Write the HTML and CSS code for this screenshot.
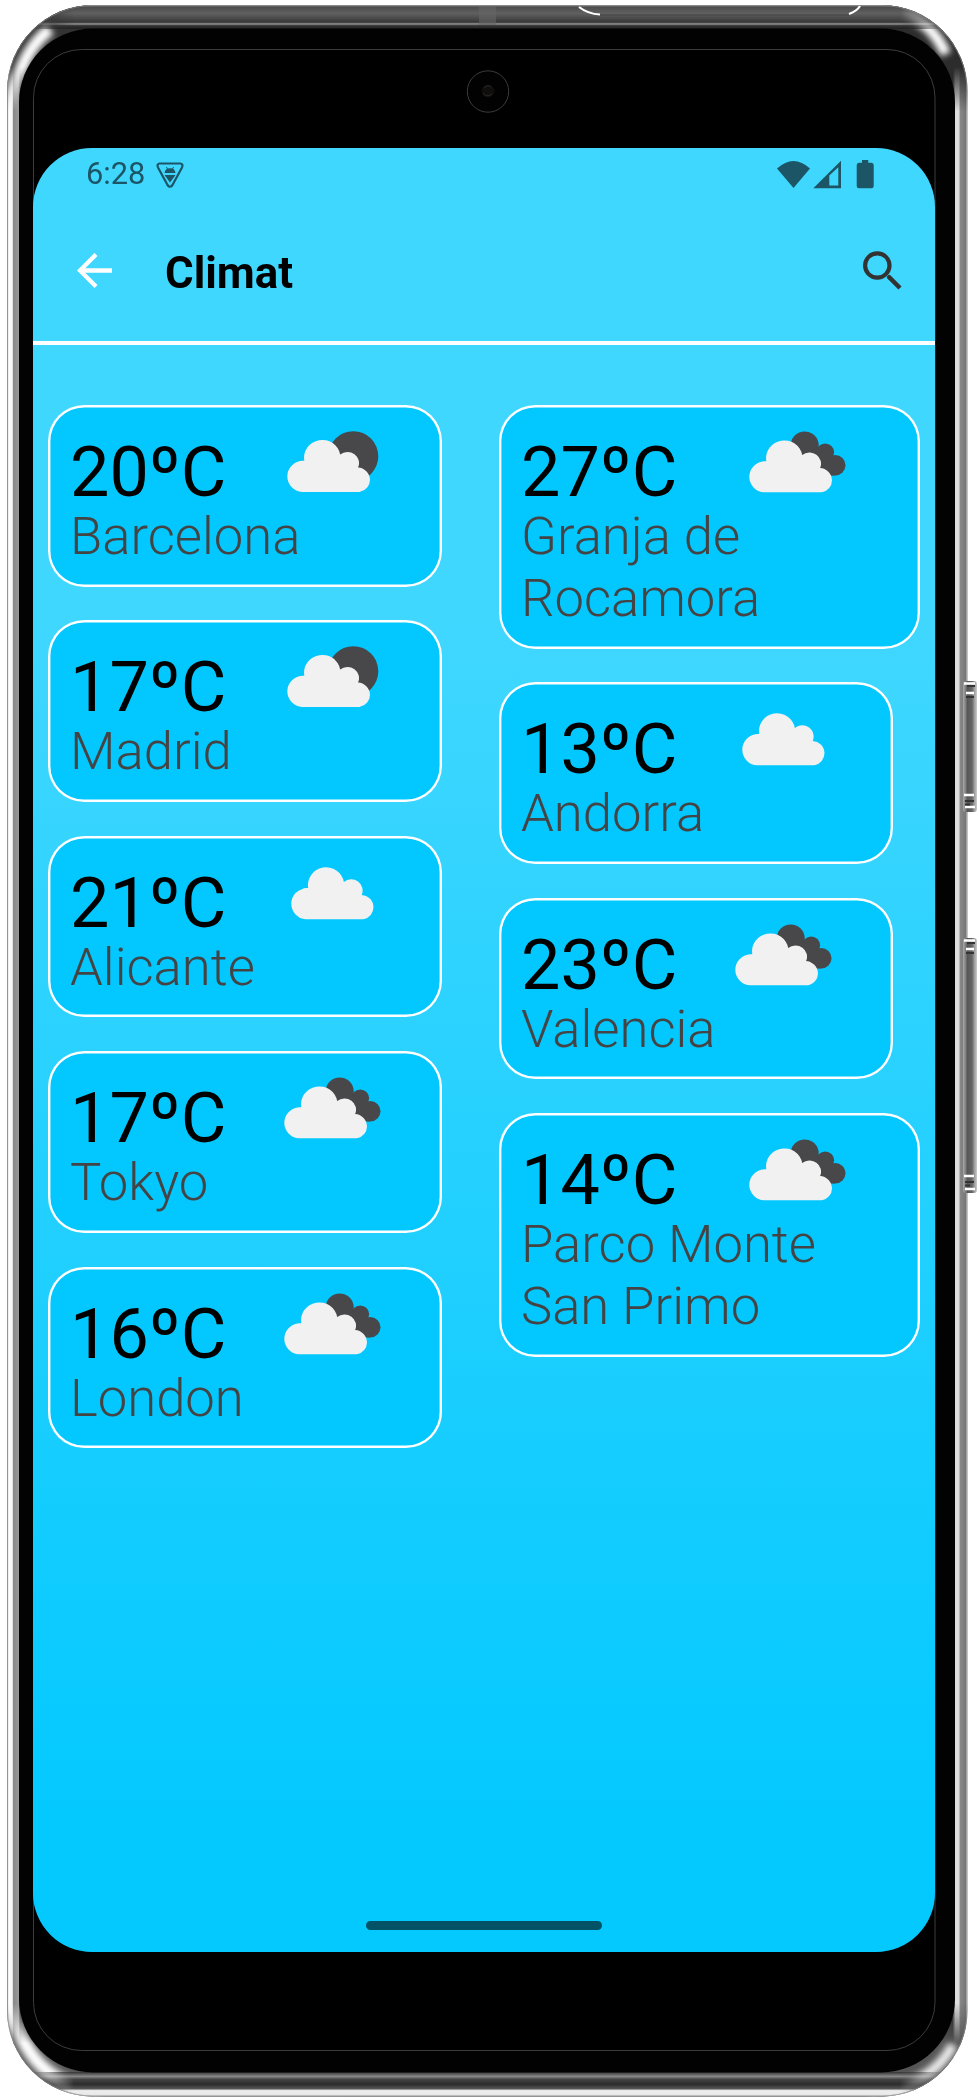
FILE: index.html
```html
<!DOCTYPE html>
<html lang="en">
<head>
<meta charset="utf-8">
<title>Climat</title>
<link rel="stylesheet" href="styles.css">
</head>
<body>
<svg class="defs" width="0" height="0" aria-hidden="true">
  <defs>
    <symbol id="cloud" viewBox="0 0 83.500 53" preserveAspectRatio="none">
      <path d="M15.7 53A15.7 15.7 0 0 1 15.7 21.7H17.8A17.6 17.6 0 1 1 52.6 15.5A11.2 11.2 0 0 1 70 28.6A12.3 12.3 0 0 1 71.3 53Z"/>
    </symbol>
    <symbol id="wx-moon" viewBox="0 0 110 82">
      <circle cx="75.3" cy="33.2" r="25" fill="#48484a"/>
      <use class="white" href="#cloud" x="8" y="16" width="86" height="53"/>
    </symbol>
    <symbol id="wx-broken" viewBox="0 0 110 82">
      <g fill="#48484a"><circle cx="61.7" cy="22.4" r="14"/><circle cx="82.2" cy="29.3" r="8.9"/><circle cx="92.2" cy="42.3" r="10.3"/><path d="M60 22L82 29 92 52.6H70L52 34Z"/></g>
      <use class="white" href="#cloud" x="5" y="16.5" width="86" height="53"/>
    </symbol>
    <symbol id="wx-cloud" viewBox="0 0 110 82">
      <use class="white" href="#cloud" x="12" y="12.4" width="85.5" height="53"/>
    </symbol>
  </defs>
</svg>

<div class="device">
  <svg class="frame" viewBox="0 0 978 2100" aria-hidden="true">
    <defs>
      <linearGradient id="side" gradientUnits="userSpaceOnUse" x1="7" y1="0" x2="967" y2="0">
        <stop offset="0" stop-color="#888"/><stop offset=".0012" stop-color="#ddd"/><stop offset=".0018" stop-color="#fff"/><stop offset=".0055" stop-color="#f6f6f6"/><stop offset=".0068" stop-color="#888"/><stop offset=".012" stop-color="#999"/><stop offset=".0135" stop-color="#333"/>
        <stop offset=".985" stop-color="#222"/><stop offset=".988" stop-color="#ddd"/><stop offset=".9915" stop-color="#ddd"/><stop offset=".993" stop-color="#888"/><stop offset=".9985" stop-color="#777"/><stop offset="1" stop-color="#ccc"/>
      </linearGradient>
      <linearGradient id="top" x1="0" y1="0" x2="0" y2="1">
        <stop offset="0" stop-color="#aaa"/><stop offset=".08" stop-color="#4c4c4c"/><stop offset=".35" stop-color="#606060"/><stop offset=".72" stop-color="#383838"/><stop offset=".79" stop-color="#999"/><stop offset=".86" stop-color="#333"/><stop offset="1" stop-color="#222"/>
      </linearGradient>
      <linearGradient id="bottom" x1="0" y1="0" x2="0" y2="1">
        <stop offset="0" stop-color="#333"/><stop offset=".18" stop-color="#888"/><stop offset=".3" stop-color="#444"/><stop offset=".5" stop-color="#2c2c2c"/><stop offset=".68" stop-color="#555"/><stop offset=".76" stop-color="#eee"/><stop offset=".95" stop-color="#e6e6e6"/><stop offset="1" stop-color="#aaa"/>
      </linearGradient>
      <linearGradient id="fade" x1="0" y1="0" x2="1" y2="0">
        <stop offset=".02" stop-color="#000"/><stop offset=".07" stop-color="#fff"/><stop offset=".93" stop-color="#fff"/><stop offset=".98" stop-color="#000"/>
      </linearGradient>
      <linearGradient id="fadeV" gradientUnits="userSpaceOnUse" x1="0" y1="0" x2="0" y2="2100">
        <stop offset=".032" stop-color="#fff"/><stop offset=".053" stop-color="#000"/><stop offset=".954" stop-color="#000"/><stop offset=".973" stop-color="#fff"/>
      </linearGradient>
      <mask id="m"><rect x="7" y="0" width="960" height="2100" fill="url(#fade)"/></mask>
      <mask id="mv" maskUnits="userSpaceOnUse" x="0" y="0" width="978" height="2100"><rect width="978" height="2100" fill="url(#fadeV)"/></mask>
      <clipPath id="body"><rect x="7" y="5" width="960.5" height="2091.5" rx="86"/></clipPath>
      <linearGradient id="key" x1="0" y1="0" x2="1" y2="0">
        <stop offset="0" stop-color="#aaa"/><stop offset=".22" stop-color="#777"/><stop offset=".3" stop-color="#555"/><stop offset=".65" stop-color="#666"/><stop offset=".8" stop-color="#999"/><stop offset="1" stop-color="#ccc"/>
      </linearGradient>
      <filter id="soft" x="-40%" y="-40%" width="180%" height="180%"><feGaussianBlur stdDeviation="3"/></filter>
    </defs>
    <g clip-path="url(#body)">
      <rect width="978" height="2100" fill="url(#side)"/>
      <g mask="url(#mv)">
        <path d="M14 115C16 65 38 24 90 14" fill="none" stroke="#333" stroke-width="34"/>
        <path d="M12 120C13 72 30 45 50 29" fill="none" stroke="#fff" stroke-width="12" filter="url(#soft)"/>
        <path d="M960 115C955 60 930 24 880 16" fill="none" stroke="#2c2c2c" stroke-width="34"/>
        <path d="M900 13C920 17 936 32 946 54" fill="none" stroke="#fff" stroke-width="11" filter="url(#soft)"/>
        <path d="M13 1990C18 2045 48 2080 95 2084" fill="none" stroke="#555" stroke-width="28"/>
        <path d="M11 1990C15 2050 46 2085 100 2092" fill="none" stroke="#fff" stroke-width="13" filter="url(#soft)"/>
        <path d="M961 1990C955 2048 928 2080 875 2084" fill="none" stroke="#555" stroke-width="28"/>
        <path d="M953 2045C940 2070 915 2088 870 2093" fill="none" stroke="#eee" stroke-width="10" filter="url(#soft)"/>
      </g>
      <g mask="url(#m)">
        <rect x="7" y="5" width="960" height="24" fill="url(#top)"/>
        <rect x="7" y="2072" width="960" height="24.5" fill="url(#bottom)"/>
      </g>
      <rect x="479" y="6" width="17" height="19" fill="#666" opacity=".6"/>
      <path d="M579 7Q588 14 600 14.500M849 14Q857 11 860 6" fill="none" stroke="#fff" stroke-width="2.200"/>
      <path d="M600 15H849" stroke="#444"/>
    </g>
    <rect x="7.500" y="5.500" width="959.500" height="2090.500" rx="85.500" fill="none" stroke="#888" stroke-opacity=".7"/>
    <rect x="19" y="28.500" width="936" height="2044" rx="74" fill="#020202"/>
    <rect x="33.500" y="49.500" width="901.500" height="2001" rx="48" fill="#000" stroke="#3c3c3c"/>
    <circle cx="488" cy="91.500" r="20.700" fill="#020202" stroke="#3c3c3c"/>
    <circle cx="488" cy="91" r="6.500" fill="#100e0d"/>
    <path d="M483 93Q486 98 492 94M484 88Q488 84 491 87" fill="none" stroke="#2b2826"/>
    <g id="keys">
      <rect x="963" y="681" width="14" height="131" rx="3" fill="url(#key)"/>
      <path d="M964 683.500H975M966 693H974M964 795H974M965 807H975" stroke="#fff" stroke-width="2.500"/>
      <path d="M967 686H975M966 697H974M965 801H974M965 804.500H970" stroke="#333" stroke-width="2"/>
      <rect x="963" y="938" width="14" height="255" rx="3" fill="url(#key)"/>
      <path d="M964 940.500H975M966 949H974M964 1176H974M965 1189H975" stroke="#fff" stroke-width="2.500"/>
      <path d="M967 943H975M966 953H974M965 1182H974M965 1185.500H970" stroke="#333" stroke-width="2"/>
    </g>
  </svg>

  <main class="screen">
    <div class="status">
      <span class="time">6:28</span>
      <svg class="debug" viewBox="0 0 28 27"><path d="M3.500 1.500H24.500Q27.500 2 26 5.500L16.500 23Q14 26.500 11.500 23L2 5.500Q.5 2 3.500 1.500Z" fill="none" stroke="#1c5566" stroke-width="2.200"/><path d="M8.500 11Q9 6.500 14 6.300T19.500 11ZM8.500 13H19.500L14 20.500Z" fill="#1c5566"/><path d="M10.500 5L12 8M17.500 5L16 8" stroke="#1c5566"/></svg>
      <svg class="signals" viewBox="0 0 97 29"><g fill="#1c5566"><path d="M0 8.500Q16.500-6.500 33 8.500L16.500 28Z"/><path fill-rule="evenodd" d="M36.300 28.300L64 .8V28.300ZM52.300 15.500V25.600H61.300V7.200Z"/><path d="M85 0H91.300V2.800H94.500Q96.700 3 96.700 5V26Q96.700 28.300 94.500 28.300H82Q79.700 28.300 79.700 26V5Q79.700 3 82 2.800H85Z"/></g></svg>
    </div>
    <header class="bar">
      <svg class="back" viewBox="0 0 35 35"><path d="M35 17.500H3M19 1.500L3 17.500L19 33.500" fill="none" stroke="#fff" stroke-width="4.300"/></svg>
      <h1 class="title">Climat</h1>
      <svg class="search" viewBox="0 0 39 39"><circle cx="14.300" cy="14.500" r="12.200" fill="none" stroke="#333" stroke-width="4.200"/><path d="M25.500 25.500L37 37" stroke="#333" stroke-width="4.500"/><path d="M23.500 26L26 23.500L28.500 26L26 28.500Z" fill="#333"/></svg>
    </header>
    <div class="grid">
      <section class="col">
        <article class="card"><div class="top"><span class="temp">20ºC</span><svg class="icon"><use href="#wx-moon"/></svg></div><p class="city">Barcelona</p></article>
        <article class="card"><div class="top"><span class="temp">17ºC</span><svg class="icon"><use href="#wx-moon"/></svg></div><p class="city">Madrid</p></article>
        <article class="card"><div class="top"><span class="temp">21ºC</span><svg class="icon"><use href="#wx-cloud"/></svg></div><p class="city">Alicante</p></article>
        <article class="card"><div class="top"><span class="temp">17ºC</span><svg class="icon"><use href="#wx-broken"/></svg></div><p class="city">Tokyo</p></article>
        <article class="card"><div class="top"><span class="temp">16ºC</span><svg class="icon"><use href="#wx-broken"/></svg></div><p class="city">London</p></article>
      </section>
      <section class="col">
        <article class="card wide"><div class="top"><span class="temp">27ºC</span><svg class="icon"><use href="#wx-broken"/></svg></div><p class="city">Granja de<br>Rocamora</p></article>
        <article class="card"><div class="top"><span class="temp">13ºC</span><svg class="icon"><use href="#wx-cloud"/></svg></div><p class="city">Andorra</p></article>
        <article class="card"><div class="top"><span class="temp">23ºC</span><svg class="icon"><use href="#wx-broken"/></svg></div><p class="city">Valencia</p></article>
        <article class="card wide"><div class="top"><span class="temp">14ºC</span><svg class="icon"><use href="#wx-broken"/></svg></div><p class="city">Parco Monte<br>San Primo</p></article>
      </section>
    </div>
    <div class="home"></div>
  </main>
</div>
</body>
</html>
```
FILE: styles.css
```css
* { box-sizing: border-box; }
body { margin: 0; background: #fff; font-family: Roboto, "Liberation Sans", sans-serif; }
.defs { position: absolute; }
.device { position: relative; width: 978px; height: 2100px; padding: 148px 43px 148px 33px; overflow: hidden; }
.frame { position: absolute; inset: 0; width: 978px; height: 2100px; }
.screen {
  position: relative; width: 902px; height: 1804px; border-radius: 59px; overflow: hidden;
  display: flex; flex-direction: column;
  background: linear-gradient(#40d7ff 0, #40d7ff 26%, #04c9ff 92%);
}
.status { height: 52px; padding: 6px 61px 0 53px; display: flex; align-items: flex-start; }
.time { font-size: 30.800px; line-height: 36px; color: #1c5566; margin-top: 2px; }
.debug { width: 28px; height: 27px; margin: 8px 0 0 11px; }
.signals { width: 97px; height: 29px; margin: 6px 0 0 auto; }
.bar { height: 145px; border-bottom: 4px solid #fff; padding: 0 33px 0 44px; display: flex; align-items: flex-start; }
.back { width: 35px; height: 35px; margin-top: 53px; }
.title { margin: 47px 0 0 53px; font-size: 43.800px; line-height: 52px; font-weight: 700; color: #000; }
.search { width: 39px; height: 39px; margin: 51px 0 0 auto; }
.grid { flex: 1; padding: 60px 15px 0; display: grid; grid-template-columns: 393.500px 421px; justify-content: space-between; align-items: start; }
.col { display: flex; flex-direction: column; align-items: flex-start; gap: 33.900px; }
.card { width: 393.500px; height: 181.500px; padding: 18px 22px; box-shadow: inset 0 0 0 2.400px #fff; border-radius: 36px; background: #03c8ff; }
.wide { width: 421px; height: 243.500px; }
.top { display: flex; height: 82px; }
.temp { width: 208px; padding-top: 19px; font-size: 70.100px; line-height: 60px; color: #000; }
.icon { width: 110px; height: 82px; }
.wide .temp { width: 222px; }
.city { margin: 0; font-size: 52.600px; line-height: 62.200px; font-weight: 300; color: #444; white-space: nowrap; }
.white { fill: #f1f1f1; }
.home { width: 236px; height: 9px; border-radius: 5px; background: #035266; margin: 0 auto 22px; }
```
